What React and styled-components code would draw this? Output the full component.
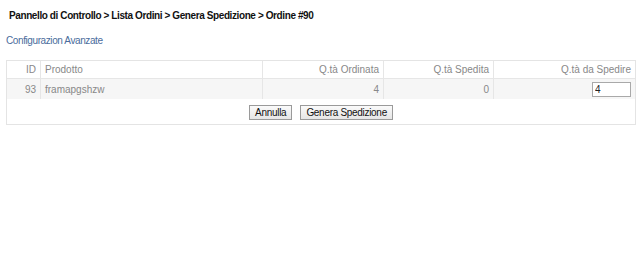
import React from 'react'
import styled, { createGlobalStyle } from 'styled-components'

const GlobalStyle = createGlobalStyle`
  html, body {
    margin: 0;
    padding: 0;
    background: #ffffff;
  }
  body {
    font-family: 'Liberation Sans', Arial, sans-serif;
    font-size: 11px;
    color: #333;
  }
`

const Page = styled.div`
  padding: 9px 4px 0 6px;
`

const Breadcrumb = styled.h1`
  margin: 0 0 0 3px;
  font-size: 10px;
  font-weight: bold;
  letter-spacing: -0.4px;
  color: #111;
  line-height: 14px;
`

const ConfigLink = styled.a`
  display: inline-block;
  margin-top: 11px;
  font-size: 10px;
  letter-spacing: -0.4px;
  color: #4a6c9c;
  text-decoration: none;
  line-height: 14px;
`

const Panel = styled.div`
  margin-top: 12px;
  border: 1px solid #e4e4e4;
  padding-bottom: 4px;
`

const Table = styled.table`
  width: 100%;
  border-collapse: collapse;
`

const HeadCell = styled.th`
  font-weight: normal;
  color: #888;
  font-size: 10px;
  height: 17px;
  padding: 0 4px;
  text-align: ${({ align }) => align || 'right'};
  border-right: ${({ last }) => (last ? 'none' : '1px solid #e6e6e6')};
  border-bottom: 1px solid #e6e6e6;
  width: ${({ w }) => w || 'auto'};
`

const Row = styled.tr`
  background: #f6f6f6;
`

const Cell = styled.td`
  color: #888;
  font-size: 10px;
  height: 20px;
  padding: 0 4px;
  text-align: ${({ align }) => align || 'right'};
  border-right: ${({ last }) => (last ? 'none' : '1px solid #e6e6e6')};
`

const QtyInput = styled.input`
  width: 33px;
  height: 13px;
  border: 1px solid #a9a9a9;
  padding: 0 2px;
  font-family: 'Liberation Sans', Arial, sans-serif;
  font-size: 10px;
  color: #222;
`

const Actions = styled.div`
  display: flex;
  justify-content: center;
  gap: 8px;
  margin-top: 6px;
`

const Button = styled.button`
  height: 15px;
  padding: 0 5px;
  border: 1px solid #9a9a9a;
  background: linear-gradient(#fafafa, #e6e6e6);
  font-family: 'Liberation Sans', Arial, sans-serif;
  font-size: 10px;
  letter-spacing: -0.3px;
  color: #111;
  line-height: 13px;
  cursor: pointer;
`

export default function App() {
  return (
    <>
      <GlobalStyle />
      <Page>
        <Breadcrumb>Pannello di Controllo &gt; Lista Ordini &gt; Genera Spedizione &gt; Ordine #90</Breadcrumb>
        <ConfigLink href="#">Configurazion Avanzate</ConfigLink>
        <Panel>
          <Table>
            <thead>
              <tr>
                <HeadCell w="25px">ID</HeadCell>
                <HeadCell align="left" w="213px">Prodotto</HeadCell>
                <HeadCell w="112px">Q.tà Ordinata</HeadCell>
                <HeadCell w="101px">Q.tà Spedita</HeadCell>
                <HeadCell last>Q.tà da Spedire</HeadCell>
              </tr>
            </thead>
            <tbody>
              <Row>
                <Cell>93</Cell>
                <Cell align="left">framapgshzw</Cell>
                <Cell>4</Cell>
                <Cell>0</Cell>
                <Cell last>
                  <QtyInput defaultValue="4" />
                </Cell>
              </Row>
            </tbody>
          </Table>
          <Actions>
            <Button>Annulla</Button>
            <Button>Genera Spedizione</Button>
          </Actions>
        </Panel>
      </Page>
    </>
  )
}
